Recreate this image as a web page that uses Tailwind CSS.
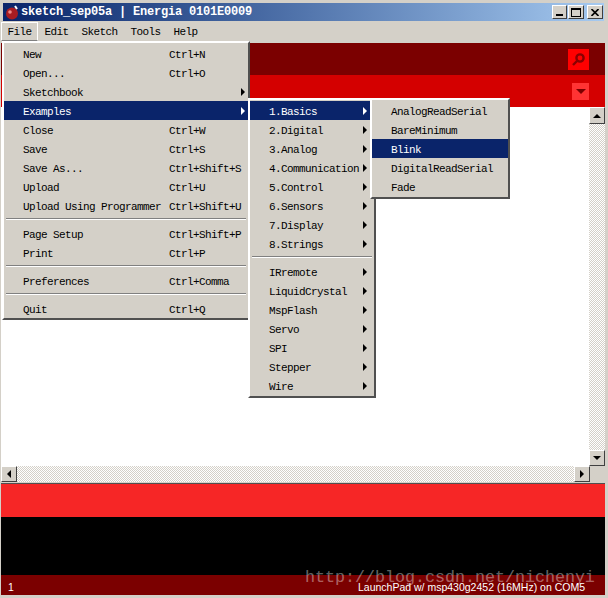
<!DOCTYPE html>
<html lang="en">
<head>
    <meta charset="UTF-8">
    <title>sketch_sep05a | Energia 0101E0009</title>
    <script src="https://cdn.jsdelivr.net/npm/@tailwindcss/browser@4"></script>
</head>
<body class="bg-[#d4d0c8]">
<div class="relative w-[608px] h-[598px] overflow-hidden bg-[#d4d0c8] pt-[3px] font-['Liberation_Mono',monospace] text-[11px] tracking-[-0.6px] text-black">

    <!-- Title bar -->
    <div class="mx-[3px] w-[601px] h-[18px] flex items-center bg-gradient-to-r from-[#0a246a] to-[#a6caf0]">
        <svg class="ml-[2px] w-[15px] h-[15px]" viewBox="0 0 15 15">
            <circle cx="7" cy="8.5" r="6" fill="#a81c22"/>
            <circle cx="5" cy="7" r="1.8" fill="#e88"/>
            <path d="M10 1 L12 4" stroke="#fff" stroke-width="2"/>
        </svg>
        <span class="ml-[1px] font-bold text-[12px] tracking-[-0.2px] text-white">sketch_sep05a | Energia 0101E0009</span>
        <div class="ml-auto mr-[1px] flex gap-[1px]">
            <div class="w-[15px] h-[14px] flex items-end justify-center pb-[2px] bg-[#d4d0c8] border border-t-white border-l-white border-r-[#404040] border-b-[#404040]">
                <div class="w-[7px] h-[2px] bg-black"></div>
            </div>
            <div class="w-[16px] h-[14px] mr-[2px] flex items-center justify-center bg-[#d4d0c8] border border-t-white border-l-white border-r-[#404040] border-b-[#404040]">
                <div class="w-[10px] h-[9px] border border-t-2 border-black"></div>
            </div>
            <div class="w-[16px] h-[14px] flex items-center justify-center bg-[#d4d0c8] border border-t-white border-l-white border-r-[#404040] border-b-[#404040]">
                <svg class="w-[8px] h-[7px]" viewBox="0 0 8 7"><path d="M0.5 0 L7.5 7 M7.5 0 L0.5 7" stroke="#000" stroke-width="1.6"/></svg>
            </div>
        </div>
    </div>

    <!-- Menu bar -->
    <div class="mt-[1px] ml-[1px] h-[19px] flex items-center">
        <div class="w-[37px] h-[19px] pt-[2px] flex items-center justify-center border border-t-white border-l-white border-r-white border-b-[#808080]">File</div>
        <div class="px-[6.5px] pt-[2px]">Edit</div>
        <div class="px-[6.5px] pt-[2px]">Sketch</div>
        <div class="px-[6.5px] pt-[2px]">Tools</div>
        <div class="px-[6.5px] pt-[2px]">Help</div>
    </div>

    <!-- Editor window -->
    <div class="mt-[2px] mx-[1px] w-[604px]">
        <div class="h-[32px] flex items-center justify-end pr-[16px] bg-[#7b0000]">
            <div class="w-[21px] h-[21px] flex items-center justify-center bg-[#ff0000]">
                <svg class="w-[15px] h-[15px]" viewBox="0 0 15 15">
                    <circle cx="9" cy="6" r="3.6" fill="none" stroke="#8a0000" stroke-width="2.4"/>
                    <path d="M6 9 L2 13" stroke="#8a0000" stroke-width="2.4"/>
                </svg>
            </div>
        </div>
        <div class="h-[32px] flex items-center justify-end pr-[16px] bg-[#d40000]">
            <div class="w-[17px] h-[17px] flex items-center justify-center bg-[#ff3333]">
                <div class="w-0 h-0 border-x-[5px] border-x-transparent border-t-[5px] border-t-[#7b0000]"></div>
            </div>
        </div>
        <div class="h-[359px] flex bg-white">
            <div class="flex-1"></div>
            <div class="w-[16px] flex flex-col bg-[repeating-conic-gradient(#d4d0c8_0_25%,#fff_0_50%)] bg-size-[2px_2px]">
                <div class="h-[17px] flex items-center justify-center bg-[#d4d0c8] border border-t-white border-l-white border-r-[#404040] border-b-[#404040]">
                    <div class="w-0 h-0 border-x-[4px] border-x-transparent border-b-[4px] border-b-black"></div>
                </div>
                <div class="mt-auto h-[16px] flex items-center justify-center bg-[#d4d0c8] border border-t-white border-l-white border-r-[#404040] border-b-[#404040]">
                    <div class="w-0 h-0 border-x-[4px] border-x-transparent border-t-[4px] border-t-black"></div>
                </div>
            </div>
        </div>
        <div class="h-[16px] flex">
            <div class="w-[589px] flex justify-between bg-[repeating-conic-gradient(#d4d0c8_0_25%,#fff_0_50%)] bg-size-[2px_2px]">
                <div class="w-[16px] flex items-center justify-center bg-[#d4d0c8] border border-t-white border-l-white border-r-[#404040] border-b-[#404040]">
                    <div class="w-0 h-0 border-y-[4px] border-y-transparent border-r-[4px] border-r-black"></div>
                </div>
                <div class="w-[16px] flex items-center justify-center bg-[#d4d0c8] border border-t-white border-l-white border-r-[#404040] border-b-[#404040]">
                    <div class="w-0 h-0 border-y-[4px] border-y-transparent border-l-[4px] border-l-black"></div>
                </div>
            </div>
        </div>
        <div class="h-[1px] bg-[#d4d0c8]"></div>
        <div class="h-[34px] bg-[#f62626] border-t border-[#505050]"></div>
        <div class="h-[58px] bg-black"></div>
        <div class="h-[20px] pt-[5px] flex items-center justify-between pl-[7px] pr-[20px] bg-[#7b0000] font-['Liberation_Sans',sans-serif] text-[10.5px] tracking-normal text-white">
            <span>1</span>
            <span>LaunchPad w/ msp430g2452 (16MHz) on COM5</span>
        </div>
    </div>

    <!-- Watermark -->
    <div class="absolute left-[305px] top-[567px] text-[16.67px] tracking-normal leading-[22px] text-white/40">http://blog.csdn.net/nichenyi</div>

    <!-- File menu -->
    <div class="absolute left-[2px] top-[41px] w-[248px] pt-[1px] bg-[#d4d0c8] border-2 border-t-white border-l-white border-r-[#505050] border-b-[#505050]">
        <div class="relative h-[19px] pt-[4px] flex items-center pl-[19px]">New<span class="absolute left-[165px]">Ctrl+N</span></div>
        <div class="relative h-[19px] pt-[4px] flex items-center pl-[19px]">Open...<span class="absolute left-[165px]">Ctrl+O</span></div>
        <div class="relative h-[19px] pt-[4px] flex items-center pl-[19px]">Sketchbook<div class="absolute top-[6px] right-[3px] w-0 h-0 border-y-[4px] border-y-transparent border-l-[4px] border-l-black"></div></div>
        <div class="relative h-[19px] pt-[4px] flex items-center pl-[19px] bg-[#0a246a] text-white">Examples<div class="absolute top-[6px] right-[3px] w-0 h-0 border-y-[4px] border-y-transparent border-l-[4px] border-l-white"></div></div>
        <div class="relative h-[19px] pt-[4px] flex items-center pl-[19px]">Close<span class="absolute left-[165px]">Ctrl+W</span></div>
        <div class="relative h-[19px] pt-[4px] flex items-center pl-[19px]">Save<span class="absolute left-[165px]">Ctrl+S</span></div>
        <div class="relative h-[19px] pt-[4px] flex items-center pl-[19px]">Save As...<span class="absolute left-[165px]">Ctrl+Shift+S</span></div>
        <div class="relative h-[19px] pt-[4px] flex items-center pl-[19px]">Upload<span class="absolute left-[165px]">Ctrl+U</span></div>
        <div class="relative h-[19px] pt-[4px] flex items-center pl-[19px]">Upload Using Programmer<span class="absolute left-[165px]">Ctrl+Shift+U</span></div>
        <div class="h-[9px] pt-[3px]"><div class="h-[2px] mx-[2px] bg-[#808080] border-b border-white"></div></div>
        <div class="relative h-[19px] pt-[4px] flex items-center pl-[19px]">Page Setup<span class="absolute left-[165px]">Ctrl+Shift+P</span></div>
        <div class="relative h-[19px] pt-[4px] flex items-center pl-[19px]">Print<span class="absolute left-[165px]">Ctrl+P</span></div>
        <div class="h-[9px] pt-[3px]"><div class="h-[2px] mx-[2px] bg-[#808080] border-b border-white"></div></div>
        <div class="relative h-[19px] pt-[4px] flex items-center pl-[19px]">Preferences<span class="absolute left-[165px]">Ctrl+Comma</span></div>
        <div class="h-[9px] pt-[3px]"><div class="h-[2px] mx-[2px] bg-[#808080] border-b border-white"></div></div>
        <div class="relative h-[19px] pt-[4px] flex items-center pl-[19px]">Quit<span class="absolute left-[165px]">Ctrl+Q</span></div>
    </div>

    <!-- Examples submenu -->
    <div class="absolute left-[248px] top-[98px] w-[128px] pt-[1px] pb-[1px] bg-[#d4d0c8] border-2 border-t-white border-l-white border-r-[#505050] border-b-[#505050]">
        <div class="relative h-[19px] pt-[4px] flex items-center pl-[19px] bg-[#0a246a] text-white">1.Basics<div class="absolute top-[6px] right-[7px] w-0 h-0 border-y-[4px] border-y-transparent border-l-[4px] border-l-white"></div></div>
        <div class="relative h-[19px] pt-[4px] flex items-center pl-[19px]">2.Digital<div class="absolute top-[6px] right-[7px] w-0 h-0 border-y-[4px] border-y-transparent border-l-[4px] border-l-black"></div></div>
        <div class="relative h-[19px] pt-[4px] flex items-center pl-[19px]">3.Analog<div class="absolute top-[6px] right-[7px] w-0 h-0 border-y-[4px] border-y-transparent border-l-[4px] border-l-black"></div></div>
        <div class="relative h-[19px] pt-[4px] flex items-center pl-[19px]">4.Communication<div class="absolute top-[6px] right-[7px] w-0 h-0 border-y-[4px] border-y-transparent border-l-[4px] border-l-black"></div></div>
        <div class="relative h-[19px] pt-[4px] flex items-center pl-[19px]">5.Control<div class="absolute top-[6px] right-[7px] w-0 h-0 border-y-[4px] border-y-transparent border-l-[4px] border-l-black"></div></div>
        <div class="relative h-[19px] pt-[4px] flex items-center pl-[19px]">6.Sensors<div class="absolute top-[6px] right-[7px] w-0 h-0 border-y-[4px] border-y-transparent border-l-[4px] border-l-black"></div></div>
        <div class="relative h-[19px] pt-[4px] flex items-center pl-[19px]">7.Display<div class="absolute top-[6px] right-[7px] w-0 h-0 border-y-[4px] border-y-transparent border-l-[4px] border-l-black"></div></div>
        <div class="relative h-[19px] pt-[4px] flex items-center pl-[19px]">8.Strings<div class="absolute top-[6px] right-[7px] w-0 h-0 border-y-[4px] border-y-transparent border-l-[4px] border-l-black"></div></div>
        <div class="h-[9px] pt-[3px]"><div class="h-[2px] mx-[2px] bg-[#808080] border-b border-white"></div></div>
        <div class="relative h-[19px] pt-[4px] flex items-center pl-[19px]">IRremote<div class="absolute top-[6px] right-[7px] w-0 h-0 border-y-[4px] border-y-transparent border-l-[4px] border-l-black"></div></div>
        <div class="relative h-[19px] pt-[4px] flex items-center pl-[19px]">LiquidCrystal<div class="absolute top-[6px] right-[7px] w-0 h-0 border-y-[4px] border-y-transparent border-l-[4px] border-l-black"></div></div>
        <div class="relative h-[19px] pt-[4px] flex items-center pl-[19px]">MspFlash<div class="absolute top-[6px] right-[7px] w-0 h-0 border-y-[4px] border-y-transparent border-l-[4px] border-l-black"></div></div>
        <div class="relative h-[19px] pt-[4px] flex items-center pl-[19px]">Servo<div class="absolute top-[6px] right-[7px] w-0 h-0 border-y-[4px] border-y-transparent border-l-[4px] border-l-black"></div></div>
        <div class="relative h-[19px] pt-[4px] flex items-center pl-[19px]">SPI<div class="absolute top-[6px] right-[7px] w-0 h-0 border-y-[4px] border-y-transparent border-l-[4px] border-l-black"></div></div>
        <div class="relative h-[19px] pt-[4px] flex items-center pl-[19px]">Stepper<div class="absolute top-[6px] right-[7px] w-0 h-0 border-y-[4px] border-y-transparent border-l-[4px] border-l-black"></div></div>
        <div class="relative h-[19px] pt-[4px] flex items-center pl-[19px]">Wire<div class="absolute top-[6px] right-[7px] w-0 h-0 border-y-[4px] border-y-transparent border-l-[4px] border-l-black"></div></div>
    </div>

    <!-- Basics submenu -->
    <div class="absolute left-[370px] top-[98px] w-[140px] pt-[1px] pb-[1px] bg-[#d4d0c8] border-2 border-t-white border-l-white border-r-[#505050] border-b-[#505050]">
        <div class="h-[19px] pt-[4px] flex items-center pl-[19px]">AnalogReadSerial</div>
        <div class="h-[19px] pt-[4px] flex items-center pl-[19px]">BareMinimum</div>
        <div class="h-[19px] pt-[4px] flex items-center pl-[19px] bg-[#0a246a] text-white">Blink</div>
        <div class="h-[19px] pt-[4px] flex items-center pl-[19px]">DigitalReadSerial</div>
        <div class="h-[19px] pt-[4px] flex items-center pl-[19px]">Fade</div>
    </div>
</div>
</body>
</html>
